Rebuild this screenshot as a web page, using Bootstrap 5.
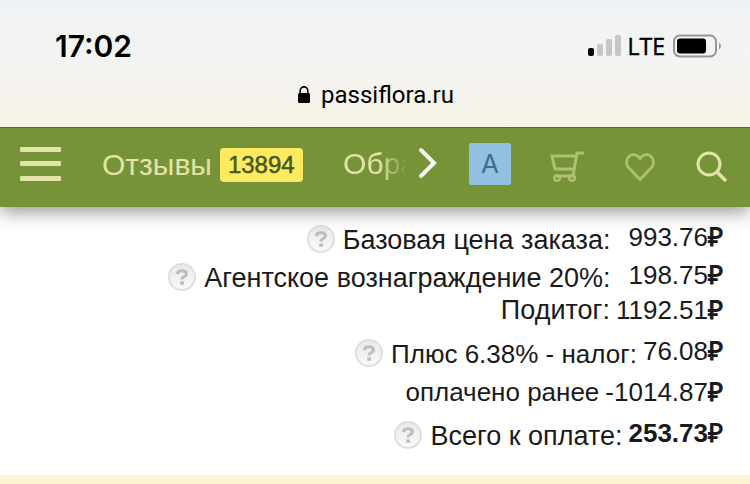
<!DOCTYPE html>
<html lang="ru">
<head>
<meta charset="utf-8">
<meta name="viewport" content="width=device-width, initial-scale=1">
<title>passiflora.ru</title>
<link href="https://cdn.jsdelivr.net/npm/bootstrap@5.3.0/dist/css/bootstrap.min.css" rel="stylesheet">
<style>
body{font-family:"Liberation Sans",Arial,sans-serif;background:#fff;color:#1a1a1a;overflow-x:hidden}
.phone-top{font-family:Inter,sans-serif;color:#000;background:linear-gradient(180deg,#eff2f5 0%,#f3f4f3 45%,#f7f3e6 100%);padding:28px 29px 16px 55px;z-index:2}
.clock{font-size:30px;line-height:36px;font-weight:600}
.carrier{font-family:"Open Sans",sans-serif;font-size:23px;line-height:36px;margin:0 8px 0 6px;-webkit-text-stroke:.5px #000}
.address{font-family:Roboto,sans-serif;font-size:24px;line-height:32px;padding:15px 0 0}
.address-row{margin-left:-25px}
.shopbar{background:#769338;border-top:1px solid #50692a;height:80px;padding:0 22px 8px 20px;box-shadow:0 4px 18px rgba(0,0,0,.45);z-index:1}
.shopbar button{background:none;border:0;padding:0;line-height:0}
.menu-link{color:#e3e3a9;font-size:30px;line-height:36px;text-decoration:none}
.menu-first{margin-left:25px;padding-top:2px}
.menu-fade{-webkit-mask-image:linear-gradient(90deg,#000 36px,transparent 64px);mask-image:linear-gradient(90deg,#000 36px,transparent 64px)}
.counter{background:#fdea60;color:#46591f;font-size:24px;line-height:34px;padding:0 8px;border-radius:4px;-webkit-text-stroke:.5px #46591f}
.letter{background:#93c0de;color:#3b6d93;font-family:Inter,sans-serif;font-size:26px;line-height:42px;width:42px;height:42px;text-align:center;text-decoration:none;border-radius:2px}
.icons{gap:39px;padding:6px 0 0 39px}
.totals{font-size:26px;line-height:30px;padding:15px 27px 16px 0}
.totals dt{font-size:27px;margin-right:6px}
.totals dt.mixed{font-size:26px}
.rub{-webkit-text-stroke:1px #1a1a1a}
.fw-bold .rub{-webkit-text-stroke:0}
.sum-row{min-height:41px}
.sum-first{min-height:38px}
.sum-second{min-height:35px}
.with-help{padding-top:3px}
.label-wide{margin-right:12px}
.help-btn{background:none;border:0;padding:0;line-height:0}
.notice{background:#fcf5d4;height:9px}
</style>
<script src="https://cdn.jsdelivr.net/npm/bootstrap@5.3.0/dist/js/bootstrap.bundle.min.js"></script>
</head>
<body>
<svg class="position-absolute" width="0" height="0" aria-hidden="true">
<defs>
<linearGradient id="disc" x1="0" y1="0" x2="0" y2="1"><stop offset="0" stop-color="#e9e9e9"/><stop offset="1" stop-color="#fafafa"/></linearGradient>
<symbol id="help" viewBox="0 0 28 28"><circle cx="14" cy="14" r="13" fill="url(#disc)" stroke="#dfdfdf" stroke-width="2"/><path d="M9.700 11.200V9.800Q10.600 7.800 14 7.800Q18.400 7.800 18.400 10.800Q18.400 12.700 16.200 13.600Q14 14.400 14 16.400" fill="none" stroke="#bdbdbd" stroke-width="3"/><path d="M12.200 18.400h3.800v3.400h-3.800z" fill="#bdbdbd"/></symbol>
</defs>
</svg>

<header class="phone-top position-relative">
  <div class="d-flex justify-content-between align-items-center">
    <span class="clock">17:02</span>
    <div class="d-flex align-items-center">
      <svg width="34" height="22" viewBox="0 0 34 22" role="img" aria-label="Сигнал"><rect y="13" width="6" height="8" rx="2"/><g fill="#c5c6c5"><rect x="9" y="9" width="6" height="12" rx="2"/><rect x="18" y="4" width="6" height="17" rx="2"/><rect x="27" y="0" width="6" height="21" rx="2"/></g></svg>
      <span class="carrier">LTE</span>
      <svg width="48" height="24" viewBox="0 0 48 24" role="img" aria-label="Батарея"><rect x="1" y="1.500" width="42" height="21" rx="6" fill="none" stroke="#969794" stroke-width="2"/><rect x="4" y="4.500" width="29" height="15" rx="3"/><path d="M46 8.500q4 3.500 0 7z" fill="#969794"/></svg>
    </div>
  </div>
  <div class="address d-flex justify-content-center">
    <div class="address-row d-flex align-items-center">
      <svg class="me-2" width="16" height="20" viewBox="0 0 16 20" aria-hidden="true"><rect x="1" y="8" width="12" height="10" rx="1.500"/><path d="M3.200 9V5.700a3.800 3.800 0 0 1 7.600 0V9" fill="none" stroke="#000" stroke-width="1.600"/></svg>
      <span>passiflora.ru</span>
    </div>
  </div>
</header>

<nav class="shopbar d-flex align-items-center position-relative">
  <button type="button" aria-label="Меню"><svg width="41" height="36" viewBox="0 0 41 36" fill="#e3e3a9"><rect y="1" width="41" height="5" rx="1"/><rect y="15" width="41" height="5" rx="1"/><rect y="30" width="41" height="5" rx="1"/></svg></button>
  <div class="d-flex align-items-center flex-grow-1 ps-3">
    <a class="menu-link menu-first d-flex align-items-center text-nowrap" href="#">Отзывы<span class="counter ms-2">13894</span></a>
    <a class="menu-link menu-fade ms-auto text-nowrap" href="#">Обра</a>
    <button class="me-4" type="button" aria-label="Дальше"><svg width="24" height="36" viewBox="0 0 24 36"><path d="M4 4 17 17 4 30" fill="none" stroke="#f5f6ef" stroke-width="4" stroke-linecap="round"/></svg></button>
  </div>
  <a class="letter ms-1" href="#">А</a>
  <div class="icons d-flex align-items-center flex-shrink-0">
    <button type="button" aria-label="Корзина"><svg width="36" height="34" viewBox="0 0 36 34" fill="none" stroke="#b0c072" stroke-width="3"><path d="M34 3h-7l-4 23H6M26 6H2l3 13h19"/><circle cx="7" cy="28" r="2.800" stroke-width="2.500"/><circle cx="22" cy="28" r="2.800" stroke-width="2.500"/></svg></button>
    <button type="button" aria-label="Избранное"><svg width="32" height="30" viewBox="0 0 32 30"><path d="M15 27.500 3.500 15.500C.5 12 1 6.500 4.500 4 8 1.500 12.500 2.800 15 6.500 17.500 2.800 22 1.500 25.500 4 29 6.500 29.500 12 26.500 15.500Z" fill="none" stroke="#b0c072" stroke-width="2.800" stroke-linejoin="round"/></svg></button>
    <button type="button" aria-label="Поиск"><svg width="32" height="32" viewBox="0 0 32 32" fill="none" stroke="#e3e3a9" stroke-width="3"><circle cx="13" cy="13" r="11"/><path d="m21 21 9 9" stroke-width="3.500"/></svg></button>
  </div>
</nav>

<main>
  <dl class="totals mb-0">
    <div class="sum-row sum-first d-flex justify-content-end">
      <dt class="with-help fw-normal d-flex align-items-start"><button class="help-btn me-2" type="button" aria-label="Справка"><svg width="28" height="28"><use href="#help"/></svg></button><span class="label-wide">Базовая цена заказа:</span></dt><dd class="mb-0">993.76<span class="rub">₽</span></dd>
    </div>
    <div class="sum-row sum-second d-flex justify-content-end">
      <dt class="with-help fw-normal d-flex align-items-start"><button class="help-btn me-2" type="button" aria-label="Справка"><svg width="28" height="28"><use href="#help"/></svg></button><span class="label-wide">Агентское вознаграждение 20%:</span></dt><dd class="mb-0">198.75<span class="rub">₽</span></dd>
    </div>
    <div class="sum-row d-flex justify-content-end">
      <dt class="fw-normal">Подитог:</dt><dd class="mb-0">1192.51<span class="rub">₽</span></dd>
    </div>
    <div class="sum-row d-flex justify-content-end">
      <dt class="with-help mixed fw-normal d-flex align-items-start"><button class="help-btn me-2" type="button" aria-label="Справка"><svg width="28" height="28"><use href="#help"/></svg></button>Плюс 6.38% - налог:</dt><dd class="mb-0">76.08<span class="rub">₽</span></dd>
    </div>
    <div class="sum-row d-flex justify-content-end">
      <dt class="mixed fw-normal">оплачено ранее</dt><dd class="mb-0">-1014.87<span class="rub">₽</span></dd>
    </div>
    <div class="sum-row d-flex justify-content-end">
      <dt class="with-help fw-normal d-flex align-items-start"><button class="help-btn me-2" type="button" aria-label="Справка"><svg width="28" height="28"><use href="#help"/></svg></button>Всего к оплате:</dt><dd class="mb-0 fw-bold">253.73<span class="rub">₽</span></dd>
    </div>
  </dl>
  <div class="notice"></div>
</main>
</body>
</html>
